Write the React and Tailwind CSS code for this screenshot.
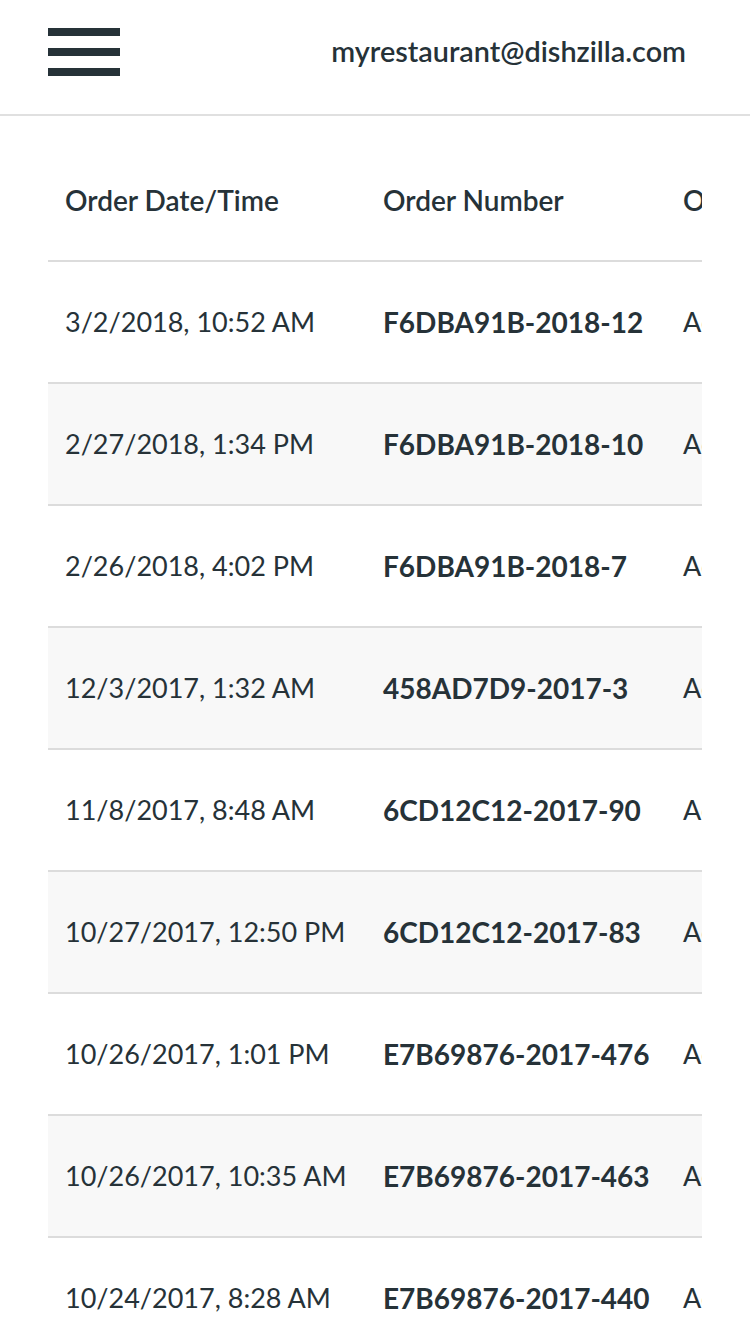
import React from 'react';

const orders = [
  { date: '3/2/2018, 10:52 AM', number: 'F6DBA91B-2018-12' },
  { date: '2/27/2018, 1:34 PM', number: 'F6DBA91B-2018-10' },
  { date: '2/26/2018, 4:02 PM', number: 'F6DBA91B-2018-7' },
  { date: '12/3/2017, 1:32 AM', number: '458AD7D9-2017-3' },
  { date: '11/8/2017, 8:48 AM', number: '6CD12C12-2017-90' },
  { date: '10/27/2017, 12:50 PM', number: '6CD12C12-2017-83' },
  { date: '10/26/2017, 1:01 PM', number: 'E7B69876-2017-476' },
  { date: '10/26/2017, 10:35 AM', number: 'E7B69876-2017-463' },
  { date: '10/24/2017, 8:28 AM', number: 'E7B69876-2017-440' },
];

const App = () => {
  return (
    <div className="min-h-[1334px] bg-white text-[#263238] font-['Lato',sans-serif] overflow-hidden">
      {/* Top bar */}
      <header className="h-[116px] border-b-2 border-[#e0e0e0] flex items-start justify-between pl-12 pr-16">
        <button className="mt-[28px] flex flex-col gap-3 cursor-pointer">
          <span className="block w-[72px] h-2 bg-[#263238]"></span>
          <span className="block w-[72px] h-2 bg-[#263238]"></span>
          <span className="block w-[72px] h-2 bg-[#263238]"></span>
        </button>
        <span className="mt-[33px] text-[28.8px] font-semibold leading-[36px]">myrestaurant@dishzilla.com</span>
      </header>

      {/* Orders table */}
      <div className="mt-6 ml-12 w-[654px] overflow-hidden">
        <div className="w-[900px]">
          <div className="h-[122px] flex items-center border-b-2 border-[#dcdcdc] text-[28px] font-semibold">
            <div className="w-[317px] pl-[17px]">Order Date/Time</div>
            <div className="w-[300px] pl-[18px]">Order Number</div>
            <div className="pl-[18px]">Order Status</div>
          </div>
          {orders.map((o, idx) => (
            <div
              key={idx}
              className={`h-[122px] flex items-center border-b-2 border-[#dcdcdc] ${idx % 2 === 1 ? 'bg-[#f8f8f8]' : 'bg-white'}`}
            >
              <div className="w-[317px] pl-[17px] text-[27px]">{o.date}</div>
              <div className="w-[300px] pl-[18px] text-[28px] font-bold">{o.number}</div>
              <div className="pl-[18px] text-[27px]">Accepted</div>
            </div>
          ))}
        </div>
      </div>
    </div>
  );
};

export default App;
